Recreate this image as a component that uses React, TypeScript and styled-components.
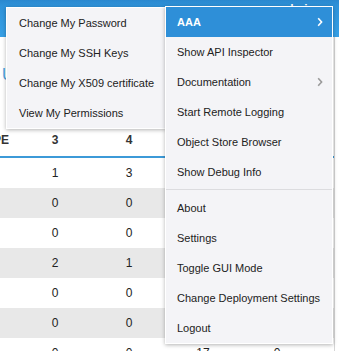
import React from 'react';
import styled, { createGlobalStyle } from 'styled-components';

const GlobalStyle = createGlobalStyle`
  html, body {
    margin: 0;
    padding: 0;
    background: #ffffff;
    overflow: hidden;
  }
  body {
    font-family: "Liberation Sans", Arial, Helvetica, sans-serif;
  }
`;

const Page = styled.div`
  position: relative;
  width: 339px;
  height: 351px;
  overflow: hidden;
  background: #ffffff;
`;

const TopBar = styled.header`
  height: 37px;
  background: linear-gradient(#2a88cf 0px, #2f93da 6px, #37a0e6 37px);
  display: flex;
  justify-content: flex-end;
`;

const UserName = styled.span`
  color: #ffffff;
  font-size: 12px;
  font-weight: bold;
  padding: 2px 24px 0 0;
`;

const Body = styled.div`
  display: flex;
`;

const Main = styled.main`
  flex: 1;
  min-width: 0;
`;

const Gutter = styled.div`
  width: 4px;
  border-left: 1px solid #d6d6d6;
  height: 320px;
`;

const TitleArea = styled.div`
  height: 87px;
  padding: 28px 0 0 2px;
  box-sizing: border-box;
`;

const Title = styled.h1`
  margin: 0;
  font-size: 16px;
  line-height: 20px;
  font-weight: normal;
  color: #4ba3e0;
`;

const Table = styled.div`
  display: flex;
  flex-direction: column;
`;

const Row = styled.div<{ $shaded?: boolean }>`
  display: flex;
  height: 30px;
  align-items: center;
  background: ${(p) => (p.$shaded ? '#e8e8e8' : '#ffffff')};
  font-size: 12px;
  color: #222;
`;

const HeadRow = styled(Row)`
  height: 32px;
  border-bottom: 2px solid #3c9ad8;
  font-weight: bold;
  color: #333;
`;

const FirstCell = styled.div`
  width: 18px;
  flex: none;
  padding-right: 9px;
  box-sizing: border-box;
`;

// the heading's start is scrolled out of view, only its last letter shows
const HeadLabel = styled.div`
  width: 9px;
  overflow: hidden;
  display: flex;
  justify-content: flex-end;
  white-space: nowrap;
`;

const Cell = styled.div`
  width: 74px;
  flex: none;
  text-align: center;
`;

const Menu = styled.nav`
  position: absolute;
  background: #f4f4f7;
  border: 1px solid #ffffff;
  box-shadow: 0 1px 4px rgba(0, 0, 0, 0.3);
  display: flex;
  flex-direction: column;
`;

const MainMenu = styled(Menu)`
  left: 165px;
  top: 6px;
  width: 166px;
  z-index: 2;
`;

const SubMenu = styled(Menu)`
  left: 6px;
  top: 7px;
  width: 158px;
  z-index: 1;
`;

const Item = styled.div<{ $active?: boolean }>`
  height: 30px;
  padding: 0 9px 0 11px;
  display: flex;
  align-items: center;
  justify-content: space-between;
  font-size: 11px;
  white-space: nowrap;
  color: ${(p) => (p.$active ? '#ffffff' : '#222')};
  background: ${(p) => (p.$active ? '#2e8fd8' : 'transparent')};
  font-weight: ${(p) => (p.$active ? 'bold' : 'normal')};
`;

const SubItem = styled(Item)`
  padding-left: 12px;
`;

const Divider = styled.div`
  height: 1px;
  background: #dcdcdf;
  margin: 2px 0 3px;
`;

const Chevron = ({ color }: { color: string }) => (
  <svg width="6" height="10" viewBox="0 0 6 10">
    <path d="M1.2 1.2 L4.6 5 L1.2 8.8" fill="none" stroke={color} strokeWidth="1.6" />
  </svg>
);

const rows: string[][] = [
  ['1', '3', '', ''],
  ['0', '0', '', ''],
  ['0', '0', '', ''],
  ['2', '1', '', ''],
  ['0', '0', '', ''],
  ['0', '0', '', ''],
  ['0', '0', '17', '0'],
];

const subItems = [
  'Change My Password',
  'Change My SSH Keys',
  'Change My X509 certificate',
  'View My Permissions',
];

function App() {
  return (
    <Page>
      <GlobalStyle />
      <TopBar>
        <UserName>admin</UserName>
      </TopBar>
      <Body>
        <Main>
          <TitleArea>
            <Title>Usage</Title>
          </TitleArea>
          <Table>
            <HeadRow>
              <FirstCell>
                <HeadLabel>TYPE</HeadLabel>
              </FirstCell>
              <Cell>3</Cell>
              <Cell>4</Cell>
              <Cell>5</Cell>
              <Cell>6</Cell>
            </HeadRow>
            {rows.map((r, i) => (
              <Row key={i} $shaded={i % 2 === 1}>
                <FirstCell />
                {r.map((v, j) => (
                  <Cell key={j}>{v}</Cell>
                ))}
              </Row>
            ))}
          </Table>
        </Main>
        <Gutter />
      </Body>

      <MainMenu>
        <Item $active>
          AAA <Chevron color="#ffffff" />
        </Item>
        <Item>Show API Inspector</Item>
        <Item>
          Documentation <Chevron color="#9a9a9a" />
        </Item>
        <Item>Start Remote Logging</Item>
        <Item>Object Store Browser</Item>
        <Item>Show Debug Info</Item>
        <Divider />
        <Item>About</Item>
        <Item>Settings</Item>
        <Item>Toggle GUI Mode</Item>
        <Item>Change Deployment Settings</Item>
        <Item>Logout</Item>
      </MainMenu>

      <SubMenu>
        {subItems.map((s) => (
          <SubItem key={s}>{s}</SubItem>
        ))}
      </SubMenu>
    </Page>
  );
}

export default App;
